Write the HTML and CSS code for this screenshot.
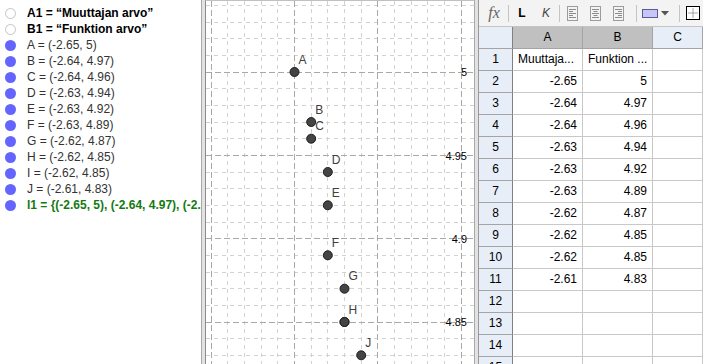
FILE: index.html
```html
<!DOCTYPE html>
<html>
<head>
    <title>Funktion arvot</title>
    <link rel="stylesheet" href="styles.css">
</head>
<body>
<div class="app">
    <div class="algebra">
        <div class="item"><span class="dot hollow"></span><span class="def text">A1 = “Muuttajan arvo”</span></div>
        <div class="item"><span class="dot hollow"></span><span class="def text">B1 = “Funktion arvo”</span></div>
        <div class="item"><span class="dot"></span><span class="def">A = (-2.65, 5)</span></div>
        <div class="item"><span class="dot"></span><span class="def">B = (-2.64, 4.97)</span></div>
        <div class="item"><span class="dot"></span><span class="def">C = (-2.64, 4.96)</span></div>
        <div class="item"><span class="dot"></span><span class="def">D = (-2.63, 4.94)</span></div>
        <div class="item"><span class="dot"></span><span class="def">E = (-2.63, 4.92)</span></div>
        <div class="item"><span class="dot"></span><span class="def">F = (-2.63, 4.89)</span></div>
        <div class="item"><span class="dot"></span><span class="def">G = (-2.62, 4.87)</span></div>
        <div class="item"><span class="dot"></span><span class="def">H = (-2.62, 4.85)</span></div>
        <div class="item"><span class="dot"></span><span class="def">I = (-2.62, 4.85)</span></div>
        <div class="item"><span class="dot"></span><span class="def">J = (-2.61, 4.83)</span></div>
        <div class="item"><span class="dot"></span><span class="def list">l1 = {(-2.65, 5), (-2.64, 4.97), (-2.64, 4.96), (-2.63, 4.94)}</span></div>
    </div>

    <div class="split"></div>

    <div class="graphics">
        <svg class="plot" width="268" height="363" viewBox="0 0 268 363">
            <g stroke="#d2d2d2" stroke-dasharray="4 4">
                <path d="M21.5 0V363M38.5 0V363M55.5 0V363M71.5 0V363M105.5 0V363M121.5 0V363M138.5 0V363M155.5 0V363M188.5 0V363M205.5 0V363M221.5 0V363M238.5 0V363"/>
                <path d="M0 4.5H268M0 21.5H268M0 37.5H268M0 54.5H268M0 87.5H268M0 104.5H268M0 121.5H268M0 137.5H268M0 171.5H268M0 187.5H268M0 204.5H268M0 221.5H268M0 254.5H268M0 271.5H268M0 287.5H268M0 304.5H268M0 337.5H268M0 354.5H268"/>
            </g>
            <g stroke="#a8a8a8" stroke-dasharray="6 3">
                <path d="M5.5 0V363M88.5 0V363M171.5 0V363M255.5 0V363"/>
                <path d="M0 71.5H268M0 154.5H268M0 237.5H268M0 321.5H268"/>
            </g>
            <g class="ticks">
                <text x="261" y="75">5</text>
                <text x="261" y="158.5">4.95</text>
                <text x="261" y="241.5">4.9</text>
                <text x="261" y="325">4.85</text>
            </g>
            <g fill="#444" stroke="#1e1e1e">
                <circle cx="88.5" cy="71" r="4.5"/>
                <circle cx="105.2" cy="121" r="4.5"/>
                <circle cx="105.2" cy="137.7" r="4.5"/>
                <circle cx="121.8" cy="171" r="4.5"/>
                <circle cx="121.8" cy="204.3" r="4.5"/>
                <circle cx="121.8" cy="254.3" r="4.5"/>
                <circle cx="138.5" cy="287.7" r="4.5"/>
                <circle cx="138.5" cy="321" r="4.5"/>
                <circle cx="138.5" cy="321" r="4.5"/>
                <circle cx="155.2" cy="354.3" r="4.5"/>
            </g>
            <g class="labels">
                <text x="92.5" y="63">A</text>
                <text x="109.2" y="112.5">B</text>
                <text x="109.2" y="129.2">C</text>
                <text x="125.8" y="162.5">D</text>
                <text x="125.8" y="196">E</text>
                <text x="125.8" y="245.8">F</text>
                <text x="142.5" y="279.2">G</text>
                <text x="142.5" y="312.5">H</text>
                <text x="159.2" y="345.8">J</text>
            </g>
        </svg>
    </div>

    <div class="split"></div>

    <div class="sheet">
        <div class="toolbar">
            <span class="fx">fx</span>
            <span class="sep sep-a"></span>
            <span class="btn bold">L</span>
            <span class="btn italic">K</span>
            <span class="sep sep-b"></span>
            <svg class="align align-l" width="11" height="15"><rect x="0.5" y="0.5" width="10" height="14" fill="none" stroke="#9c9c9c"/><path d="M2 3.5h7M2 5.5h4M2 7.5h7M2 9.5h4M2 11.5h7" stroke="#8c8c8c"/></svg>
            <svg class="align align-c" width="11" height="15"><rect x="0.5" y="0.5" width="10" height="14" fill="none" stroke="#9c9c9c"/><path d="M2 3.5h7M3.5 5.5h4M2 7.5h7M3.5 9.5h4M2 11.5h7" stroke="#8c8c8c"/></svg>
            <svg class="align align-r" width="11" height="15"><rect x="0.5" y="0.5" width="10" height="14" fill="none" stroke="#9c9c9c"/><path d="M2 3.5h7M5 5.5h4M2 7.5h7M5 9.5h4M2 11.5h7" stroke="#8c8c8c"/></svg>
            <span class="sep sep-c"></span>
            <svg class="swatch" width="16" height="9"><rect x="0.5" y="0.5" width="15" height="8" fill="#c6c6fa" stroke="#5c5c8e"/></svg>
            <svg class="caret" width="8" height="5"><path d="M0 0H8L4 4.5Z" fill="#555"/></svg>
            <span class="sep sep-d"></span>
            <svg class="frame" width="14" height="14"><rect x="0.5" y="0.5" width="13" height="13" fill="#fff" stroke="#000"/><path d="M7 2.5V12M2.5 7H12" stroke="#555" stroke-dasharray="1 1"/></svg>
        </div>
        <div class="table">
            <div class="cell rh"></div><div class="cell ch sel">A</div><div class="cell ch sel">B</div><div class="cell ch">C</div>
            <div class="cell rh">1</div><div class="cell">Muuttaja...</div><div class="cell">Funktion ...</div><div class="cell"></div>
            <div class="cell rh">2</div><div class="cell num">-2.65</div><div class="cell num">5</div><div class="cell"></div>
            <div class="cell rh">3</div><div class="cell num">-2.64</div><div class="cell num">4.97</div><div class="cell"></div>
            <div class="cell rh">4</div><div class="cell num">-2.64</div><div class="cell num">4.96</div><div class="cell"></div>
            <div class="cell rh">5</div><div class="cell num">-2.63</div><div class="cell num">4.94</div><div class="cell"></div>
            <div class="cell rh">6</div><div class="cell num">-2.63</div><div class="cell num">4.92</div><div class="cell"></div>
            <div class="cell rh">7</div><div class="cell num">-2.63</div><div class="cell num">4.89</div><div class="cell"></div>
            <div class="cell rh">8</div><div class="cell num">-2.62</div><div class="cell num">4.87</div><div class="cell"></div>
            <div class="cell rh">9</div><div class="cell num">-2.62</div><div class="cell num">4.85</div><div class="cell"></div>
            <div class="cell rh">10</div><div class="cell num">-2.62</div><div class="cell num">4.85</div><div class="cell"></div>
            <div class="cell rh">11</div><div class="cell num">-2.61</div><div class="cell num">4.83</div><div class="cell"></div>
            <div class="cell rh">12</div><div class="cell"></div><div class="cell"></div><div class="cell"></div>
            <div class="cell rh">13</div><div class="cell"></div><div class="cell"></div><div class="cell"></div>
            <div class="cell rh">14</div><div class="cell"></div><div class="cell"></div><div class="cell"></div>
            <div class="cell rh">15</div><div class="cell"></div><div class="cell"></div><div class="cell"></div>
        </div>
    </div>
</div>
</body>
</html>
```

FILE: styles.css
```css
* {
    box-sizing: border-box;
}

body {
    margin: 0;
    font-family: "Liberation Sans", Arial, sans-serif;
    font-size: 12px;
    color: #000;
    background-color: #fff;
}

.app {
    display: flex;
    height: 364px;
    overflow: hidden;
}

.split {
    width: 3px;
    flex: none;
    background-color: #e2e2e2;
}

/* algebra view */

.algebra {
    width: 202px;
    flex: none;
    padding-top: 5px;
    border-right: 1px solid #a9a9a9;
    overflow: hidden;
    white-space: nowrap;
}

.item {
    display: flex;
    align-items: center;
    height: 16px;
    padding-left: 5px;
}

.dot {
    width: 11px;
    height: 11px;
    flex: none;
    margin-right: 11px;
    border-radius: 50%;
    background-color: #6464ff;
}

.dot.hollow {
    background-color: #fff;
    border: 1px solid #c4c4c4;
}

.def {
    color: #333;
}

.def.text {
    color: #000;
    font-weight: bold;
}

.def.list {
    color: #127a12;
    font-weight: bold;
}

/* graphics view */

.graphics {
    width: 270px;
    flex: none;
    border-left: 1px solid #8c8c8c;
    border-top: 1px solid #c0c0c0;
    border-right: 1px solid #a9a9a9;
    overflow: hidden;
}

.plot {
    display: block;
}

.ticks text {
    font-family: "Liberation Sans", Arial, sans-serif;
    font-size: 11px;
    fill: #000;
    text-anchor: end;
}

.labels text {
    font-family: "Liberation Sans", Arial, sans-serif;
    font-size: 12px;
    fill: #404040;
}

/* spreadsheet view */

.sheet {
    flex: 1;
    min-width: 0;
    border-left: 1px solid #999;
    overflow: hidden;
}

.toolbar {
    display: flex;
    align-items: center;
    height: 27px;
    padding-left: 7px;
    border-bottom: 1px solid #c4c4c4;
    background-color: #f3f3f3;
    white-space: nowrap;
}

.fx {
    width: 16px;
    font-family: "Liberation Serif", "Times New Roman", serif;
    font-style: italic;
    font-size: 16px;
    color: #666;
    text-align: center;
}

.sep {
    width: 1px;
    height: 17px;
    flex: none;
    background-color: #c4c4c4;
}

.sep-a { margin-left: 6px; }
.sep-b { margin-left: 6px; }
.sep-c { margin-left: 12px; }
.sep-d { margin-left: 10px; }

.btn {
    width: 14px;
    text-align: center;
    font-size: 12px;
}

.btn.bold {
    margin-left: 6px;
    font-weight: bold;
}

.btn.italic {
    margin-left: 10px;
    font-style: italic;
    color: #444;
}

.align {
    flex: none;
    margin-left: 12px;
}

.align-l { margin-left: 7px; }

.swatch {
    flex: none;
    margin-left: 5px;
}

.caret {
    flex: none;
    margin-left: 3px;
}

.frame {
    flex: none;
    margin-left: 6px;
}

.table {
    display: grid;
    grid-template-columns: 34px 70px 70px 1fr;
    grid-auto-rows: 22px;
}

.cell {
    padding: 0 5px;
    line-height: 21px;
    border-right: 1px solid #c8c8c8;
    border-bottom: 1px solid #c8c8c8;
    overflow: hidden;
    white-space: nowrap;
}

.cell.num {
    text-align: right;
}

.cell.rh {
    padding: 0;
    text-align: center;
    background-color: #e8eef7;
    border-right-color: #808080;
    border-bottom-color: #a4a4a4;
}

.cell.ch {
    text-align: center;
    background-color: #e8eef7;
    border-right-color: #a4a4a4;
    border-bottom-color: #a4a4a4;
}

.cell.ch.sel {
    background-color: #c0c0c0;
}
```
